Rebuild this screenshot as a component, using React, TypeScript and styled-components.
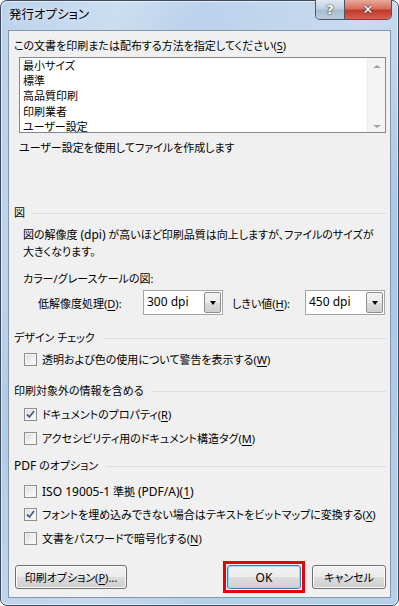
import React from 'react';
import styled, { createGlobalStyle } from 'styled-components';

const GlobalStyle = createGlobalStyle`
  html, body {
    margin: 0;
    padding: 0;
    background: #ffffff;
  }
  body {
    font-family: "Noto Sans", "Noto Sans CJK JP", sans-serif;
    font-size: 11px;
    color: #000;
    font-feature-settings: "palt";
  }
`;

const Window = styled.div`
  box-sizing: border-box;
  width: 399px;
  height: 606px;
  display: flex;
  flex-direction: column;
  padding: 0 7px 7px 7px;
  border: 1px solid #3d4b5c;
  border-radius: 7px;
  background:
    linear-gradient(115deg, rgba(255,255,255,0) 0%, rgba(255,255,255,0.25) 18%, rgba(255,255,255,0) 30%, rgba(255,255,255,0.2) 55%, rgba(255,255,255,0) 70%),
    linear-gradient(180deg, #bcd3ec 0%, #a9c6e6 40%, #b7d0ea 100%);
  box-shadow: inset 0 0 0 1px rgba(255,255,255,0.55);
`;

const TitleBar = styled.div`
  height: 29px;
  display: flex;
  align-items: flex-start;
`;

const Title = styled.div`
  margin: 6px 0 0 1px;
  font-size: 12.5px;
  line-height: 16px;
  text-shadow: 0 0 6px rgba(255,255,255,0.9);
`;

const Caption = styled.div`
  margin-left: auto;
  display: flex;
  margin-top: -1px;
  margin-right: -1px;
  border: 1px solid #4a5766;
  border-top: none;
  border-radius: 0 0 5px 5px;
  overflow: hidden;
  height: 19px;
`;

const CapButton = styled.div<{ $close?: boolean }>`
  width: ${p => (p.$close ? 46 : 28)}px;
  display: flex;
  align-items: center;
  justify-content: center;
  color: #fff;
  font-family: "DejaVu Sans", sans-serif;
  font-weight: bold;
  font-size: 13px;
  text-shadow: 0 0 1px #333, 0 0 2px #333;
  border-left: ${p => (p.$close ? '1px solid #4a5766' : 'none')};
  background: ${p =>
    p.$close
      ? 'linear-gradient(180deg, #e9a99c 0%, #d4715f 45%, #c0392b 55%, #d85f4c 100%)'
      : 'linear-gradient(180deg, #dfe8f2 0%, #c1d0e0 45%, #a9bcd1 55%, #bccbdc 100%)'};
`;

const Client = styled.div`
  flex: 1;
  display: flex;
  flex-direction: column;
  background: #f0f0f0;
  border: 1px solid #8396ac;
  padding: 0 4px 0 5px;
`;

const Label = styled.div<{ $top: number; $indent?: number }>`
  margin-top: ${p => p.$top}px;
  padding-left: ${p => p.$indent || 0}px;
  line-height: 16px;
  white-space: nowrap;
`;

const Para = styled.div<{ $top: number }>`
  margin-top: ${p => p.$top}px;
  padding-left: 9px;
  line-height: 17px;
  white-space: nowrap;
`;

// Latin runs: Meiryo UI draws them a little larger than the kana
const Latin = styled.span`
  font-size: 12px;
`;

const ListBox = styled.div`
  margin: 3px 0 0 5px;
  height: 76px;
  box-sizing: border-box;
  border: 1px solid #828790;
  background: #fff;
  display: flex;
  overflow: hidden;
`;

const Items = styled.div`
  flex: 1;
  padding: 0 0 0 3px;
`;

const Item = styled.div`
  line-height: 15.2px;
  white-space: nowrap;
`;

const ScrollBar = styled.div`
  width: 17px;
  background: #f4f4f4;
  border-left: 1px solid #ececec;
  display: flex;
  flex-direction: column;
  justify-content: space-between;
  align-items: center;
  padding: 7px 0 4px;
`;

const Arrow = styled.div<{ $down?: boolean }>`
  width: 0;
  height: 0;
  border-left: 4px solid transparent;
  border-right: 4px solid transparent;
  ${p => (p.$down ? 'border-top: 3px solid #a3a3a3;' : 'border-bottom: 3px solid #a3a3a3;')}
`;

const Heading = styled.div<{ $top: number }>`
  margin-top: ${p => p.$top}px;
  display: flex;
  align-items: center;
  line-height: 16px;
  height: 16px;
  white-space: nowrap;
  &::after {
    content: "";
    flex: 1;
    height: 1px;
    margin-left: 8px;
    background: #d5dfe5;
  }
`;

const DpiRow = styled.div`
  margin-top: 3px;
  display: grid;
  grid-template-columns: 105px 80px 82px 80px;
  align-items: center;
  padding-left: 24px;
  height: 25px;
`;

const DpiLabel = styled.div<{ $pad?: number }>`
  padding-left: ${p => p.$pad || 0}px;
  white-space: nowrap;
`;

const Combo = styled.div`
  box-sizing: border-box;
  height: 25px;
  display: flex;
  border: 1px solid #a6a6a6;
  background: #fff;
`;

const ComboText = styled.div`
  flex: 1;
  padding-left: 3px;
  line-height: 22px;
  font-size: 12px;
`;

const ComboButton = styled.div`
  width: 17px;
  margin: 1px;
  box-sizing: border-box;
  border: 1px solid #8e8e8e;
  border-radius: 2px;
  background: linear-gradient(180deg, #f2f2f2 0%, #ebebeb 50%, #dcdcdc 50%, #cfcfcf 100%);
  display: flex;
  align-items: center;
  justify-content: center;
  &::after {
    content: "";
    border-left: 3.5px solid transparent;
    border-right: 3.5px solid transparent;
    border-top: 4px solid #000;
  }
`;

const CheckRow = styled.label<{ $top: number }>`
  margin-top: ${p => p.$top}px;
  display: flex;
  align-items: center;
  padding-left: 10px;
  height: 16px;
  white-space: nowrap;
`;

const Box = styled.span`
  box-sizing: border-box;
  width: 13px;
  height: 13px;
  margin-right: 5px;
  border: 1px solid #8f8f8f;
  background: linear-gradient(135deg, #dadada 0%, #f2f2f2 60%, #fbfbfb 100%);
  box-shadow: inset 0 0 0 1px #f4f4f4;
  display: flex;
  align-items: center;
  justify-content: center;
`;

const U = styled.span`
  text-decoration: underline;
  text-underline-offset: 2px;
`;

const ButtonRow = styled.div`
  margin-top: auto;
  margin-bottom: 4px;
  display: flex;
  align-items: center;
  padding-left: 1px;
`;

const Marker = styled.div`
  margin-left: auto;
  padding: 1px;
  border: 3px solid #e5000b;
`;

const Button = styled.div<{ $w: number; $default?: boolean }>`
  box-sizing: border-box;
  width: ${p => p.$w}px;
  height: 24px;
  display: flex;
  align-items: center;
  justify-content: center;
  border: 1px solid ${p => (p.$default ? '#3c7fb1' : '#707070')};
  border-radius: 3px;
  background: linear-gradient(180deg, #f2f2f2 0%, #ebebeb 50%, #dddddd 50%, #cfcfcf 100%);
  box-shadow: inset 0 0 0 1px ${p => (p.$default ? '#8ee0fb' : '#fcfcfc')};
  white-space: nowrap;
`;

const CancelButton = styled(Button)`
  margin-left: 7px;
`;

const Check = () => (
  <svg width="9" height="9" viewBox="0 0 9 9">
    <path d="M1 4.5 L3.5 7 L8 1" fill="none" stroke="#4c5f8a" strokeWidth="1.8" />
  </svg>
);

const CheckItem: React.FC<{ top: number; checked?: boolean; children: React.ReactNode }> = ({ top, checked, children }) => (
  <CheckRow $top={top}>
    <Box>{checked && <Check />}</Box>
    <span>{children}</span>
  </CheckRow>
);

const presets = ['最小サイズ', '標準', '高品質印刷', '印刷業者', 'ユーザー設定'];

export default function App() {
  return (
    <>
      <GlobalStyle />
      <Window>
        <TitleBar>
          <Title>発行オプション</Title>
          <Caption>
            <CapButton>?</CapButton>
            <CapButton $close>✕</CapButton>
          </Caption>
        </TitleBar>
        <Client>
          <Label $top={7}>この文書を印刷または配布する方法を指定してください(<U>S</U>)</Label>
          <ListBox>
            <Items>
              {presets.map(p => (
                <Item key={p}>{p}</Item>
              ))}
            </Items>
            <ScrollBar>
              <Arrow />
              <Arrow $down />
            </ScrollBar>
          </ListBox>
          <Label $top={7} $indent={5}>ユーザー設定を使用してファイルを作成します</Label>

          <Heading $top={49}>図</Heading>
          <Para $top={5}>
            図の解像度 <Latin>(dpi)</Latin> が高いほど印刷品質は向上しますが、ファイルのサイズが
            <br />
            大きくなります。
          </Para>
          <Label $top={11} $indent={9}>カラー/グレースケールの図:</Label>
          <DpiRow>
            <DpiLabel>低解像度処理(<U>D</U>):</DpiLabel>
            <Combo>
              <ComboText>300 dpi</ComboText>
              <ComboButton />
            </Combo>
            <DpiLabel $pad={9}>しきい値(<U>H</U>):</DpiLabel>
            <Combo>
              <ComboText>450 dpi</ComboText>
              <ComboButton />
            </Combo>
          </DpiRow>

          <Heading $top={15}>デザイン チェック</Heading>
          <CheckItem top={5}>透明および色の使用について警告を表示する(<U>W</U>)</CheckItem>

          <Heading $top={16}>印刷対象外の情報を含める</Heading>
          <CheckItem top={7} checked>ドキュメントのプロパティ(<U>R</U>)</CheckItem>
          <CheckItem top={8}>アクセシビリティ用のドキュメント構造タグ(<U>M</U>)</CheckItem>

          <Heading $top={12}><Latin>PDF</Latin>&nbsp;のオプション</Heading>
          <CheckItem top={9}><Latin>ISO 19005-1</Latin> 準拠 <Latin>(PDF/A)(<U>1</U>)</Latin></CheckItem>
          <CheckItem top={7} checked>フォントを埋め込みできない場合はテキストをビットマップに変換する(<U>X</U>)</CheckItem>
          <CheckItem top={8}>文書をパスワードで暗号化する(<U>N</U>)</CheckItem>

          <ButtonRow>
            <Button $w={112}>印刷オプション(<U>P</U>)...</Button>
            <Marker>
              <Button $w={74} $default><Latin>OK</Latin></Button>
            </Marker>
            <CancelButton $w={74}>キャンセル</CancelButton>
          </ButtonRow>
        </Client>
      </Window>
    </>
  );
}
